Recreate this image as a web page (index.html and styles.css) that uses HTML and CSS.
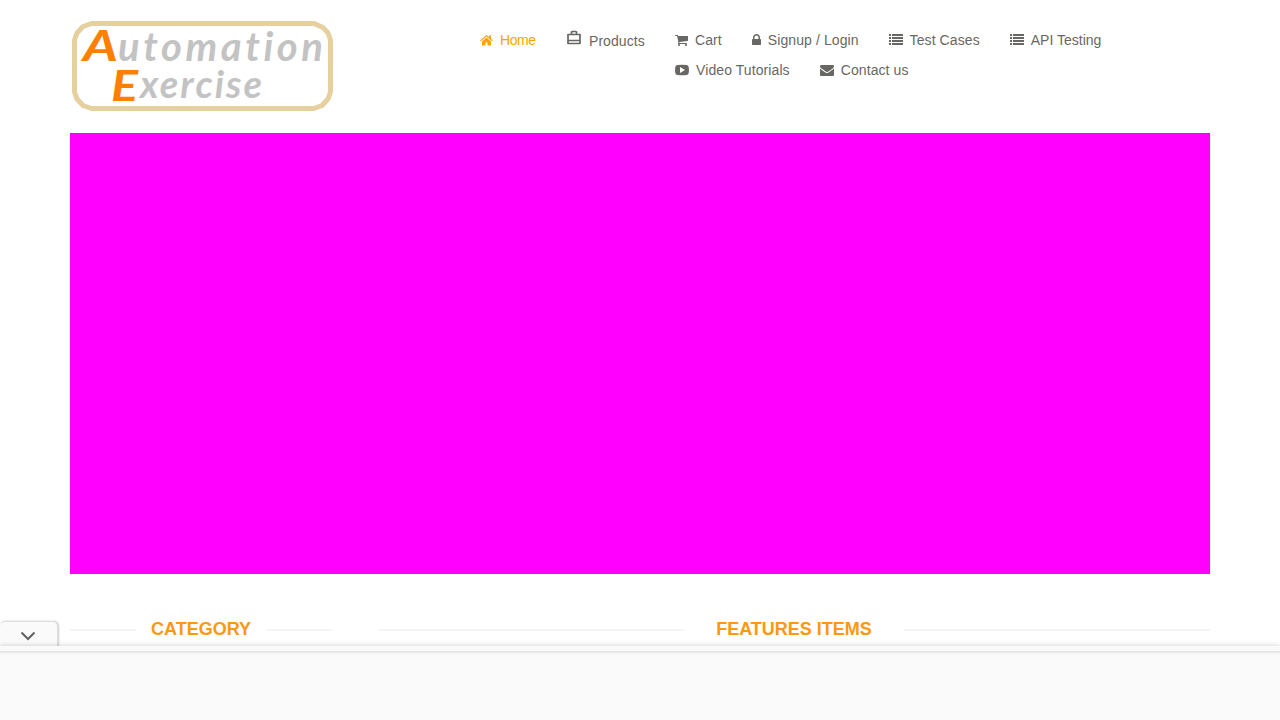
FILE: index.html
```html
<!DOCTYPE html>
<html lang="en">
<head>
<meta charset="utf-8">
<title>Automation Exercise</title>
<link rel="stylesheet" href="styles.css">
</head>
<body>
<header class="container header">
  <a class="logo">
    <svg width="264" height="92" viewBox="0 0 264 92" role="img" aria-label="Automation Exercise">
      <path class="frame" d="M21.500 3.500H244L253 7.500 258 13 260.500 20V72L258 79 252 85.500 244 88.500H21.500L13 85.500 7 79 4.500 72V20L7 13 13 6.500Z"/>
      <g class="script">
        <text class="accent" x="13" y="41" font-size="42" textLength="35" lengthAdjust="spacingAndGlyphs">A</text>
        <text x="48" y="41" font-size="40" textLength="205" lengthAdjust="spacing">utomation</text>
        <text class="accent" x="41" y="81" font-size="42" textLength="27" lengthAdjust="spacingAndGlyphs">E</text>
        <text x="70" y="78" font-size="38" textLength="122" lengthAdjust="spacing">xercise</text>
      </g>
    </svg>
  </a>
  <nav class="nav">
    <a class="item active"><svg class="icon w13" viewBox="0 0 13 14"><path d="M6.500 2L9 4.100V2.500H11V5.800L13 7.500 12.200 8.300 6.500 3.600.8 8.300 0 7.500ZM6.500 4.500L11 8.200V12.500H7.500V9.500H5.500V12.500H2V8.200Z"/></svg>Home</a>
    <a class="item products"><svg class="bag" viewBox="0 0 14 15"><path d="M1 4.500H13M1 13.500H13M1 10.500H13M1 4V14M13 4V14M4.500 4V2L5.500 1.500H8.500L9.500 2V4"/></svg>Products</a>
    <div class="links">
      <a class="item"><svg class="icon w13" viewBox="64 0 1664 1792"><path d="M704 1536q0 52-38 90t-90 38-90-38-38-90 38-90 90-38 90 38 38 90zm896 0q0 52-38 90t-90 38-90-38-38-90 38-90 90-38 90 38 38 90zm128-1088v512q0 24-16.500 42.500t-40.500 21.500l-1044 122q13 60 13 70 0 16-24 64h920q26 0 45 19t19 45-19 45-45 19h-1024q-26 0-45-19t-19-45q0-11 8-31.500t16-36 21.500-40 15.500-29.500l-177-823h-204q-26 0-45-19t-19-45 19-45 45-19h256q16 0 28.500 6.500t19.500 15.500 13 24.500 8 26 5.500 29.500 4.500 26h1201q26 0 45 19t19 45z"/></svg>Cart</a>
      <a class="item"><svg class="icon w9" viewBox="320 0 1152 1792"><path d="M640 768h512v-192q0-106-75-181t-181-75-181 75-75 181v192zm832 96v576q0 40-28 68t-68 28h-960q-40 0-68-28t-28-68v-576q0-40 28-68t68-28h32v-192q0-184 132-316t316-132 316 132 132 316v192h32q40 0 68 28t28 68z"/></svg>Signup / Login</a>
      <a class="item"><svg class="icon" viewBox="0 0 14 14"><path d="M0 1h2v2H0zM3 1h11v2H3zM0 4h2v2H0zM3 4h11v2H3zM0 7h2v2H0zM3 7h11v2H3zM0 10h2v2H0zM3 10h11v2H3z"/></svg>Test Cases</a>
      <a class="item api"><svg class="icon" viewBox="0 0 14 14"><path d="M0 1h2v2H0zM3 1h11v2H3zM0 4h2v2H0zM3 4h11v2H3zM0 7h2v2H0zM3 7h11v2H3zM0 10h2v2H0zM3 10h11v2H3z"/></svg>API Testing</a>
      <a class="item"><svg class="icon" viewBox="0 0 14 14"><path fill-rule="evenodd" d="M2.500 2Q7 1.600 11.500 2 13.400 2.100 13.700 4 14.200 7 13.700 10 13.400 11.900 11.500 12 7 12.400 2.500 12 .6 11.900.3 10-.2 7 .3 4 .6 2.100 2.500 2ZM5 4V10L10 7Z"/></svg>Video Tutorials</a>
      <a class="item"><svg class="icon" viewBox="0 0 1792 1792"><path d="M1792 710v794q0 66-47 113t-113 47h-1472q-66 0-113-47t-47-113v-794q44 49 101 87 362 246 497 345 57 42 92.500 65.500t94.500 48 110 24.500h2q51 0 110-24.500t94.500-48 92.500-65.500q170-123 498-345 57-39 100-87zm0-294q0 79-49 151t-122 123q-376 261-468 325-10 7-42.500 30.500t-54 38-52 32.500-57.500 27-50 9h-2q-23 0-50-9t-57.500-27-52-32.500-54-38-42.500-30.500q-91-64-262-182.500t-205-142.500q-62-42-117-115.500t-55-136.500q0-78 41.500-130t118.500-52h1472q65 0 112.500 47t47.500 113z"/></svg>Contact us</a>
    </div>
  </nav>
</header>
<main class="container">
  <section class="slider"></section>
  <div class="columns">
    <h2 class="title category">Category</h2>
    <h2 class="title features">Features Items</h2>
  </div>
</main>
<aside class="anchor">
  <div class="anchor-tab"><svg width="16" height="10" viewBox="0 0 16 10"><path d="M1.500 1.500L8 8L14.500 1.500"/></svg></div>
  <div class="anchor-edge"></div>
  <div class="anchor-body"></div>
</aside>
</body>
</html>
```
FILE: styles.css
```css
* { box-sizing: border-box; }
body {
  margin: 0;
  height: 720px;
  overflow: hidden;
  background: #fff;
  font-family: "Liberation Sans", Arial, sans-serif;
}
.container { width: 1140px; margin: 0 auto; }
.header { display: flex; height: 133px; padding-top: 20px; }
.logo { width: 410px; flex: none; }
.logo svg { display: block; }
.frame { fill: none; stroke: #e6d0a0; stroke-width: 5; stroke-linejoin: round; }
.script {
  font-family: Lato, sans-serif;
  font-style: italic;
  font-weight: 700;
  font-variant-ligatures: none;
  fill: #c3c3c3;
}
.script .accent { fill: #ff7f00; }
.nav { display: flex; align-items: flex-start; gap: 30px; padding-top: 10px; }
.links { display: flex; flex-wrap: wrap; column-gap: 30px; row-gap: 10px; width: 460px; letter-spacing: .09px; }
.item {
  display: flex;
  align-items: center;
  gap: 7px;
  height: 20px;
  font-size: 14px;
  line-height: 20px;
  color: #696763;
  white-space: nowrap;
}
.active { width: 56px; color: orange; letter-spacing: -.4px; }
.products { width: 79px; height: 22px; gap: 8px; padding-left: 1px; letter-spacing: .06px; }
.api { letter-spacing: 0; }
.icon { width: 14px; height: 14px; flex: none; fill: currentColor; }
.w13 { width: 13px; }
.w9 { width: 9px; }
.bag {
  width: 14px;
  height: 15px;
  margin-bottom: 7px;
  fill: none;
  stroke: currentColor;
  stroke-width: 1.7;
}
.slider { height: 441px; background: #f0f; }
.columns { display: flex; justify-content: space-between; padding-top: 45px; }
.title {
  display: flex;
  align-items: center;
  margin: 0;
  height: 20px;
  font-size: 18px;
  line-height: 20px;
  font-weight: 700;
  text-transform: uppercase;
  color: #fe980f;
  white-space: nowrap;
}
.title::before, .title::after { content: ""; flex: 1; height: 2px; margin-top: 2px; background: #f5f5f5; }
.category { width: 262px; gap: 15px; }
.features { width: 832px; gap: 32px; }
.anchor { position: fixed; left: 0; right: 0; bottom: 0; height: 99px; }
.anchor-tab {
  display: flex;
  align-items: center;
  justify-content: center;
  width: 58px;
  height: 25px;
  padding-top: 3px;
  padding-right: 2px;
  background: #fafafa;
  border-top: 1px solid #ddd;
  border-right: 1px solid #ddd;
  border-radius: 5px 5px 0 0;
  box-shadow: 1px 0 2px rgba(0, 0, 0, .2);
}
.anchor-tab svg { fill: none; stroke: #616161; stroke-width: 2; }
.anchor-edge { position: relative; height: 5px; background: #fafafa; box-shadow: 0 -1px 4px rgba(0, 0, 0, .15); }
.anchor-body { height: 69px; background: linear-gradient(#e8e8e8, #f5f5f5 2px, #fafafa 5px); }
```
